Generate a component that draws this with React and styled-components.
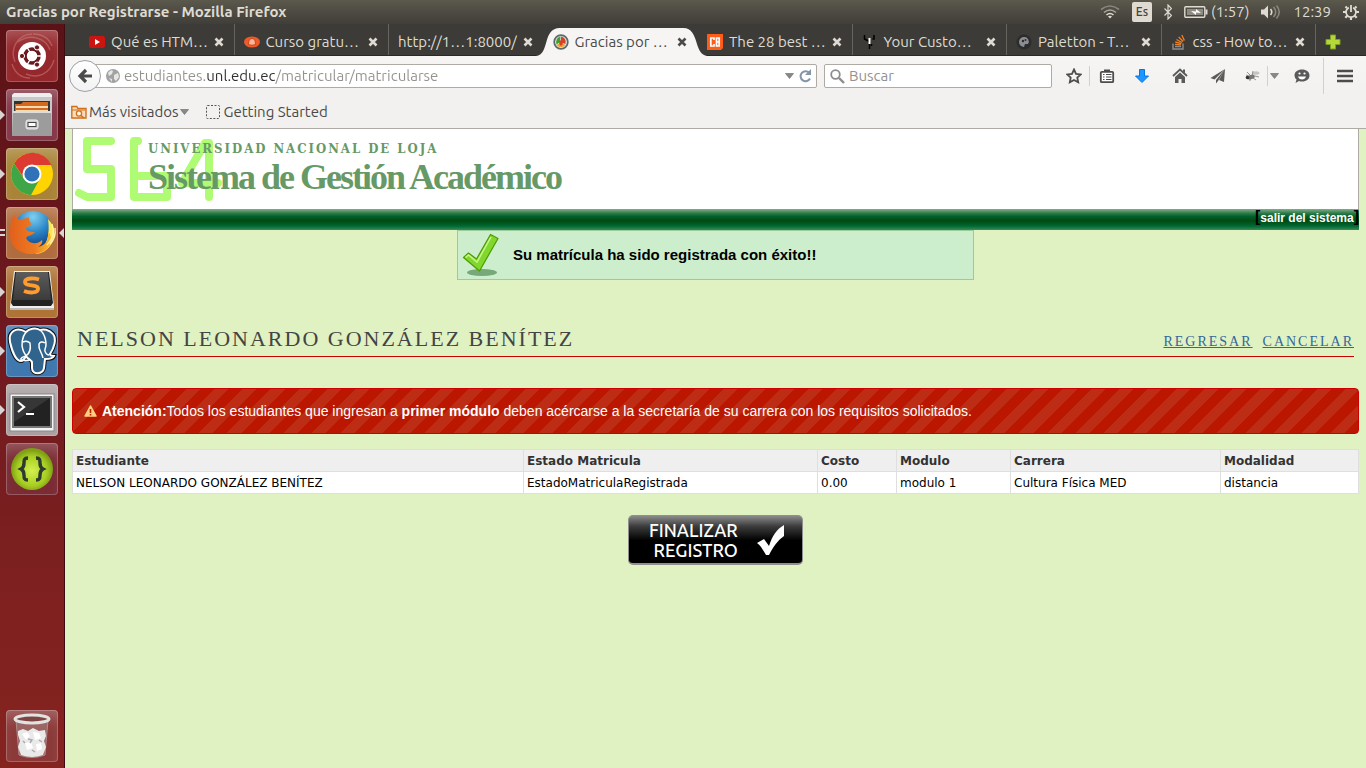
import React from "react";
import styled, { createGlobalStyle, css } from "styled-components";

const ui = '"Ubuntu", "Open Sans", "Noto Sans", sans-serif';
const sans = '"Liberation Sans", Arial, sans-serif';
const serif = '"Liberation Serif", "Times New Roman", serif';

const GlobalStyle = createGlobalStyle`
  *, *::before, *::after { box-sizing: border-box; }
  body { margin: 0; background: #e0f1c2; }
  button, input { font: inherit; color: inherit; border: 0; padding: 0; margin: 0; background: none; }
  a { color: inherit; text-decoration: none; }
  svg { display: block; flex: none; }
  ul { list-style: none; margin: 0; padding: 0; }
`;

const Desktop = styled.div`
  min-height: 100vh;
  display: flex;
  flex-direction: column;
`;

/* ---------- system panel ---------- */
const Panel = styled.header`
  height: 24px;
  flex: none;
  display: flex;
  align-items: center;
  justify-content: space-between;
  padding: 0 7px 0 6px;
  background: linear-gradient(#5b584c, #403e39);
  color: #dfdbd2;
  font: 15px/24px ${ui};
`;
const PanelTitle = styled.strong`
  font-size: 15px;
  font-weight: 700;
`;
const Tray = styled.div`
  display: flex;
  align-items: center;
  gap: 12px;
`;
const TrayItem = styled.span`
  display: flex;
  align-items: center;
  gap: 3px;
`;
const Layout = styled.span`
  width: 20px;
  height: 20px;
  border-radius: 2px;
  background: #dfdbd2;
  color: #45433d;
  font-size: 12px;
  line-height: 20px;
  text-align: center;
  font-weight: 500;
`;

const Work = styled.div`
  flex: 1;
  display: flex;
`;

/* ---------- launcher ---------- */
const Launcher = styled.nav`
  width: 65px;
  flex: none;
  display: flex;
  flex-direction: column;
  gap: 7px;
  padding: 6px 7px 6px 6px;
  border-right: 1px solid #3f0d10;
  background: linear-gradient(#5b1216, #701a20 45%, #80211f 80%, #85231f);
`;
const Tile = styled.button`
  position: relative;
  width: 52px;
  height: 52px;
  border-radius: 4px;
  background: ${(p) => p.$bg};
  box-shadow: inset 0 0 0 1px rgba(255, 255, 255, 0.22), inset 0 14px 16px -8px rgba(255, 255, 255, 0.25);
  ${(p) => p.$last && css`margin-top: auto;`}
`;
const Running = styled.span`
  position: absolute;
  top: 21px;
  left: -6px;
  border: 5px solid transparent;
  border-left-color: #d8d4d4;
  border-right: 0;
`;
const Bars = styled.span`
  position: absolute;
  top: 22px;
  left: -6px;
  width: 5px;
  height: 7px;
  border: solid #d8d4d4;
  border-width: 2px 0;
`;
const Focused = styled.span`
  position: absolute;
  top: 21px;
  right: -6px;
  border: 5px solid transparent;
  border-right-color: #d8d4d4;
  border-left: 0;
`;

/* ---------- browser ---------- */
const Browser = styled.div`
  flex: 1;
  min-width: 0;
  display: flex;
  flex-direction: column;
`;
const TabStrip = styled.div`
  height: 32px;
  display: flex;
  padding-left: 15px;
  background: #3c3b37;
  border-bottom: 1px solid #2a2926;
`;
const Tab = styled.div`
  position: relative;
  flex: 1;
  min-width: 0;
  height: ${(p) => (p.$active ? 32 : 31)}px;
  display: flex;
  align-items: center;
  gap: 6px;
  padding: 4px 10px 0 9px;
  color: ${(p) => (p.$active ? "#4a4a48" : "#dfdbd2")};
  font: 15px/20px ${ui};
  border-right: 1px solid ${(p) => (p.$active || p.$flat ? "transparent" : "#66645e")};
`;
const Shape = styled.svg`
  position: absolute;
  left: -8px;
  top: 4px;
  width: calc(100% + 18px);
  height: 28px;
  z-index: 0;
`;
const TabLabel = styled.button`
  position: relative;
  flex: 1;
  min-width: 0;
  white-space: nowrap;
  text-align: left;
`;
const Close = styled.button`
  position: relative;
  width: 10px;
  height: 10px;
`;
const TabIcon = styled.span`
  position: relative;
  width: 16px;
  height: 16px;
`;
const NewTab = styled.button`
  width: 50px;
  display: grid;
  place-items: center;
  padding: 4px 16px 0 0;
`;
const NavBar = styled.div`
  height: 40px;
  display: flex;
  align-items: center;
  padding-left: 4px;
  background: linear-gradient(#f6f5f4, #f2f1f0);
`;
const Back = styled.button`
  position: relative;
  z-index: 1;
  width: 32px;
  height: 32px;
  margin-right: -12px;
  border: 1px solid #9d9fa6;
  border-radius: 50%;
  background: linear-gradient(#ffffff, #f2f2f3);
  display: grid;
  place-items: center;
`;
const Field = styled.div`
  height: 24px;
  display: flex;
  align-items: center;
  gap: 4px;
  border: 1px solid #aeaba4;
  border-radius: 2px;
  background: #fff;
  font: 15px/22px ${ui};
`;
const UrlField = styled(Field)`
  flex: 1;
  min-width: 0;
  padding: 0 4px 0 16px;
`;
const UrlInput = styled.input`
  flex: 1;
  min-width: 0;
  height: 22px;
  background: linear-gradient(90deg, #94928f 82px, #2f2f2f 82px, #2f2f2f 151px, #94928f 151px);
  background-clip: text;
  -webkit-background-clip: text;
  -webkit-text-fill-color: transparent;
`;
const SearchField = styled(Field)`
  width: 228px;
  margin-left: 7px;
  padding: 0 5px;
`;
const SearchInput = styled.input`
  flex: 1;
  min-width: 0;
  height: 22px;
  &::placeholder { color: #94928f; opacity: 1; }
`;
const IconButton = styled.button`
  width: ${(p) => p.$w}px;
  height: ${(p) => (p.$tall ? 36 : 20)}px;
  display: grid;
  place-items: center;
  border-left: ${(p) => (p.$sep ? "1px solid #d0d0d0" : "0")};
`;
const Tools = styled.div`
  display: flex;
  align-items: center;
  margin-left: 7px;
`;
const Bookmarks = styled.div`
  height: 33px;
  display: flex;
  align-items: center;
  gap: 16px;
  padding-left: 6px;
  background: #f2f1f0;
  border-bottom: 1px solid #aeaba4;
  color: #4a4a48;
  font: 15px/20px ${ui};
`;
const Bookmark = styled.button`
  display: flex;
  align-items: center;
  gap: 2px;
`;

/* ---------- page ---------- */
const Page = styled.main`
  flex: 1;
  padding: 0 7px;
  background: #e0f1c2;
`;
const Banner = styled.div`
  position: relative;
  height: 80px;
  padding: 12px 0 0 75px;
  background: #fff;
  border: solid #aeaba4;
  border-width: 0 1px;
  color: #669966;
`;
const Mark = styled.svg`
  position: absolute;
  left: 0;
  top: 0;
`;
const University = styled.p`
  position: relative;
  margin: 0;
  font: bold 13px/16px "DejaVu Serif Condensed", "DejaVu Serif", serif;
  font-stretch: condensed;
  letter-spacing: 2px;
`;
const System = styled.h1`
  position: relative;
  margin: 0;
  font: bold 36px/40px ${serif};
  letter-spacing: -2px;
`;
const Session = styled.div`
  height: 21px;
  background: linear-gradient(#80b08b, #2f7a48 20%, #00602a 36%, #004a10 56%, #005c26 72%, #006a34 82%, #3c8a58);
  text-align: right;
  color: #000;
  font: bold 16px/16px ${sans};
  a { color: #fff; font-size: 12px; }
`;
const Notice = styled.section`
  width: 517px;
  max-width: 100%;
  height: 50px;
  margin: 0 auto;
  display: flex;
  align-items: center;
  gap: 13px;
  padding-left: 4px;
  border: 1px solid #99cc99;
  background: #cceecc;
  color: #000;
  font: bold 15px/20px ${sans};
`;
const Heading = styled.div`
  display: flex;
  justify-content: space-between;
  align-items: baseline;
  margin: 45px 5px 31px;
  padding-bottom: 3px;
  border-bottom: 1px solid #cc0000;
  font-family: ${serif};
`;
const Student = styled.h2`
  margin: 0;
  color: #444;
  font-size: 22px;
  line-height: 28px;
  font-weight: 400;
  letter-spacing: 2px;
`;
const Actions = styled.nav`
  display: flex;
  gap: 10px;
  color: #336699;
  font-size: 14px;
  line-height: 16px;
  letter-spacing: 2px;
  a { text-decoration: underline; }
`;
const Warning = styled.section`
  display: flex;
  align-items: center;
  height: 46px;
  padding-left: 11px;
  gap: 5px;
  border: 1px solid #cc0000;
  border-radius: 4px;
  background: repeating-linear-gradient(135deg, #bd2d16 0 10px, #ba1600 10px 20px);
  color: #fff;
  font: 14px/20px ${sans};
  p { margin: 0; }
`;
const Enrolment = styled.table`
  width: 100%;
  margin-top: 15px;
  border-collapse: collapse;
  table-layout: fixed;
  background: #fff;
  font: 12px/16px "DejaVu Sans", sans-serif;
  color: #000;
  th, td { height: 22px; padding: 0 3px; text-align: left; border: 1px solid #dfdfdf; white-space: nowrap; }
  th { background: #efefef; color: #333; }
`;
const Col = styled.col`
  width: ${(p) => p.$w}px;
`;
const Finish = styled.button`
  display: flex;
  align-items: center;
  justify-content: space-between;
  width: 175px;
  height: 50px;
  margin: 21px auto 0;
  padding: 0 16px 0 20px;
  border: 1px solid #8f8f8f;
  border-width: 1px 1px 2px;
  border-radius: 5px;
  background: linear-gradient(#8a8a8a, #3c3c3c 22%, #000 52%);
  color: #fff;
  font: 500 18px/20px ${ui};
  text-align: right;
`;

/* ---------- drawings ---------- */
const S = ({ s = 16, w = s, h = s, vb, children }) => (
  <svg width={w} height={h} viewBox={vb || `0 0 ${w} ${h}`} fill="none" aria-hidden="true">{children}</svg>
);
const CloseX = () => (
  <S s={10}><path d="M1.500 1.500l7 7M8.500 1.500l-7 7" stroke="currentColor" strokeWidth="2.600" /></S>
);
const Caret = () => <S w={9} h={6}><path d="M.5 .5h8L4.500 5.500z" fill="#888" stroke="#666" strokeWidth=".6" /></S>;

const Dash = () => (
  <S s={52}>
    <path d="M26 4C10 5 4 20 9 32M46 16C42 6 34 4 27 4M48 30C44 44 32 49 20 44M6 34c3 9 9 14 18 14M12 12c12-9 28-4 32 8" stroke="#d98a8a" strokeOpacity=".45" strokeWidth="1.400" />
    <circle cx="26" cy="26" r="14" fill="#fff" />
    <circle cx="26" cy="26" r="7" stroke="#6a1a1e" strokeWidth="3.600" />
    <g stroke="#fff" strokeWidth="1.400"><path d="M26 26l10 0M26 26l-5-9M26 26l-5 9" /></g>
    <circle cx="26" cy="26" r="5" fill="#fff" />
    <g fill="#6a1a1e" stroke="#fff"><circle cx="16" cy="26" r="2.600" /><circle cx="31" cy="17.400" r="2.600" /><circle cx="31" cy="34.600" r="2.600" /></g>
  </S>
);
const Files = () => (
  <S s={52}>
    <path d="M6 6l2-2h36l2 2v8H6z" fill="#eee" /><path d="M6 8h40v38H6z" fill="#c8c8c8" />
    <path d="M8 12h36v12H8z" fill="#333" /><path d="M9 15h6l2-2h25v9H9z" fill="#d2691e" />
    <path d="M10 17h32v2H10zM10 21h32v2H10z" fill="#fbd9ae" />
    <path d="M7 22h38l1 25H6z" fill="#9c9c9c" /><path d="M7 22h38v2H7z" fill="#ddd" />
    <rect x="20" y="31" width="12" height="9" rx="2" fill="#ccc" stroke="#eee" /><rect x="22" y="33.500" width="8" height="4" fill="#fff" stroke="#444" />
  </S>
);
const Chrome = () => (
  <S s={52}>
    <circle cx="26" cy="26" r="21" fill="#ffd400" />
    <path d="M8 15.500A21 21 0 0 1 45.400 17H26a9 9 0 0 0-8 13z" fill="#dd3b32" />
    <path d="M8 15.500A21 21 0 0 0 25 47l9-16.500a9 9 0 0 1-16 0z" fill="#3fa648" />
    <circle cx="26" cy="26" r="9.500" fill="#fff" /><circle cx="26" cy="26" r="7.600" fill="#2f72b8" />
  </S>
);
const Firefox = () => (
  <S s={52}>
    <defs>
      <radialGradient id="sea" cx=".5" cy=".15" r=".8"><stop offset="0" stopColor="#7fd0ee" /><stop offset=".5" stopColor="#2a86c8" /><stop offset="1" stopColor="#123a80" /></radialGradient>
      <linearGradient id="fur" x1="0" x2="1"><stop offset="0" stopColor="#e2601c" /><stop offset=".6" stopColor="#ee7a22" /><stop offset="1" stopColor="#fdc02f" /></linearGradient>
    </defs>
    <circle cx="27" cy="24" r="20" fill="url(#sea)" />
    <path d="M42 12c7 7 8 16 4 24-4 7-10 11-17 11 13-7 15-20 13-35z" fill="#ffe650" />
    <path d="M8 8c2 1 4 3 5 5 4-2 8-1 10-3 0 3 0 4 2 6 1 2-2 3-5 5 0 3 4 4 9 4-3 4-7 3-9 6 3 6 11 7 16 2 1 3-1 5-4 7 9-2 11-9 10-16 3 4 4 8 3 12-3 7-10 11-19 11C13 47 4 39 4 28 4 20 5 12 8 8z" fill="url(#fur)" />
    <path d="M46 17c3 8 1 15-5 21M49 21c1 7-1 12-5 16" stroke="#fff3a0" strokeWidth="1.400" />
  </S>
);
const Sublime = () => (
  <S s={52}>
    <defs><linearGradient id="key" x2="0" y2="1"><stop offset="0" stopColor="#5c5c5c" /><stop offset="1" stopColor="#3b3b3b" /></linearGradient></defs>
    <path d="M8 5h36l4 36v3H4v-3z" fill="#efefef" /><path d="M4 42h44v2H4z" fill="#bbb" /><path d="M9 6h34l4 31-2 3H7l-2-3z" fill="#222" /><path d="M10 6h32l3 28H7z" fill="url(#key)" />
    <path d="M33 13.500c-4-1.500-14-2-14 2.500 0 5 14 2 13 7 0 4.500-9 4-14 2" stroke="#ff9b2f" strokeWidth="3.800" />
  </S>
);
const Postgres = () => (
  <S s={52}>
    <path d="M20 7C10 1 2 7 4 17c2 9 6 19 11 19 2 0 4-3 5-5 2 4 6 3 6 7v5c0 7 11 7 12 0l1-9c4 0 8 0 9-3-2 0-4 0-4-2 4-6 7-15 3-20C43 4 37 4 34 5c-5-3-11-1-14 2z" fill="#31648c" stroke="#111" strokeWidth="4" />
    <path d="M20 7C10 1 2 7 4 17c2 9 6 19 11 19 2 0 4-3 5-5 2 4 6 3 6 7v5c0 7 11 7 12 0l1-9c4 0 8 0 9-3-2 0-4 0-4-2 4-6 7-15 3-20C43 4 37 4 34 5c-5-3-11-1-14 2z" fill="#31648c" stroke="#fff" strokeWidth="2" />
    <path d="M20 7c-4 5-5 13-3 18 1 3 2 4 3 6 3-2 5-7 4-13-2-2-5-2-7-1M34 5c6 5 7 15 5 19-1 3 2 6 4 6M39 18c-3-2-5-1-6 1-1 6 3 8 4 14M20 31c-3 1-6 2-5 4 3 1 7 0 10 0" stroke="#fff" strokeWidth="1.500" />
  </S>
);
const Terminal = () => (
  <S s={52}>
    <rect x="4" y="10" width="44" height="37" fill="#f4f4f4" stroke="#888" /><rect x="6" y="12" width="40" height="32" fill="#777" />
    <rect x="8" y="14" width="36" height="28" fill="#222" /><path d="M8 14h36L8 38z" fill="#444" opacity=".6" />
    <path d="M12 18l6 5-6 5M20 30h8" stroke="#fff" strokeWidth="2.200" />
  </S>
);
const Braces = () => (
  <S s={52}>
    <defs><radialGradient id="lime" cx=".5" cy=".55" r=".5"><stop offset="0" stopColor="#d4f04e" /><stop offset=".7" stopColor="#a8ce22" /><stop offset="1" stopColor="#7f9f14" /></radialGradient></defs>
    <circle cx="26" cy="26" r="21" fill="url(#lime)" />
    <path d="M22 15c-4 0-4 2-4 5 0 4-1 5-3 6 2 1 3 2 3 6 0 3 0 5 4 5M30 15c4 0 4 2 4 5 0 4 1 5 3 6-2 1-3 2-3 6 0 3 0 5-4 5" stroke="#2c3a30" strokeWidth="3.400" />
  </S>
);
const Trash = () => (
  <S s={52}>
    <path d="M10 10l3 35q13 5 26 0l3-35z" fill="#a78684" opacity=".55" stroke="#ccc" />
    <path d="M12 21l5-2 5 2 5-3 6 3 6-1 1 6-2 5 2 6-3 8q-11 4-22 0l-3-8 2-6-2-6z" fill="#e9e9e9" />
    <path d="M16 24l5-2 3 4-4 4zM27 22l6 1 2 5-6 2zM19 33l6-1 2 6-6 2zM30 34l5-1 1 6-5 2z" fill="#fff" />
    <path d="M22 29l4 1-2 3M33 30l3 2M17 31l2 2M26 40l3 2" stroke="#aaa" strokeWidth="1.400" />
    <ellipse cx="26" cy="9" rx="17" ry="4" fill="#7d4542" stroke="#e2e2e2" strokeWidth="3" />
  </S>
);

const favicons = {
  youtube: <S><rect y="2" width="16" height="12" rx="2" fill="#cc1410" /><path d="M6 5l5 3-5 3z" fill="#fff" /></S>,
  orange: <S><ellipse cx="8" cy="8" rx="8" ry="5.500" fill="#f05a28" /><path d="M4.500 10.500q0-6 3.500-6t3.500 6q-3.500 1.500-7 0z" fill="#fbb59a" stroke="#c23c12" strokeWidth=".8" /></S>,
  globe: <S><circle cx="8" cy="8" r="6.800" fill="#e8eee4" stroke="#5d6a6c" strokeWidth="1.800" /><path d="M7.500 2.500Q2 4 3.500 10.500L7 8z" fill="#3fa02f" /><path d="M8 2.500Q14 4 12.500 10L8 8.500z" fill="#d9402b" /><path d="M3.500 11q4.500 4.500 9 0L8 8.500z" fill="#f0a030" /><path d="M8 5.500l2 3-1 3H7l-1-3z" fill="#d9402b" /></S>,
  cb: <S><path d="M0 0h16v14l-2 2H0z" fill="#ff5c1a" /><path d="M7 6V4H3.800v8H7v-2M9.500 4v8h2.700V4zM9.500 8h2.500" stroke="#fff" strokeWidth="1.700" /></S>,
  bug: <S><path d="M2.500 1v4l4 2M10.500 5l1.500 0V1M5.500 6l2 2v7M9.500 10v2" stroke="#000" strokeWidth="1.500" /><path d="M7.500 4v6" stroke="#fff" strokeWidth="2" /></S>,
  palette: <S><circle cx="8" cy="8" r="7.500" fill="#2b2c2e" /><path d="M8 3a5 5 0 1 0 0 10l1-3h3a4.500 4.500 0 0 0-4-7z" fill="#8b8d90" /><circle cx="7" cy="7" r="1.200" fill="#2b2c2e" /><circle cx="9.500" cy="6" r="1" fill="#2b2c2e" /></S>,
  stack: <S><path d="M2 9.500V15h10V9.500M4 12.500h6" stroke="#8b8d90" strokeWidth="1.400" /><path d="M4 10.300l6 .6M4.300 8l6 1.600M5.500 5.500l5.500 3M7.700 3l4.500 4.500M10.800 1l2.600 5.500" stroke="#f48024" strokeWidth="1.300" /></S>,
};
const tabs = [
  { icon: "youtube", label: "Qué es HTM…" },
  { icon: "orange", label: "Curso gratu…" },
  { label: "http://1…1:8000/", flat: true },
  { icon: "globe", label: "Gracias por …", active: true },
  { icon: "cb", label: "The 28 best …" },
  { icon: "bug", label: "Your Custo…" },
  { icon: "palette", label: "Paletton - T…" },
  { icon: "stack", label: "css - How to…" },
];
const launchers = [
  { name: "Inicio", Icon: Dash, bg: "#94282c" },
  { name: "Archivos", Icon: Files, bg: "#853748", run: true },
  { name: "Chrome", Icon: Chrome, bg: "#a98438", run: true },
  { name: "Firefox", Icon: Firefox, bg: "#b06c3e", bars: true, focus: true },
  { name: "Sublime Text", Icon: Sublime, bg: "#ae7335", run: true },
  { name: "pgAdmin", Icon: Postgres, bg: "#3f78ae", run: true },
  { name: "Terminal", Icon: Terminal, bg: "#aaa0a2", run: true },
  { name: "Brackets", Icon: Braces, bg: "#7a2b34" },
  { name: "Papelera", Icon: Trash, bg: "#8b3a39", last: true },
];
const columns = [
  ["Estudiante", "NELSON LEONARDO GONZÁLEZ BENÍTEZ"],
  ["Estado Matricula", "EstadoMatriculaRegistrada", 294],
  ["Costo", "0.00", 79],
  ["Modulo", "modulo 1", 114],
  ["Carrera", "Cultura Física MED", 210],
  ["Modalidad", "distancia", 138],
];

export default function App() {
  return (
    <Desktop>
      <GlobalStyle />
      <Panel>
        <PanelTitle>Gracias por Registrarse - Mozilla Firefox</PanelTitle>
        <Tray>
          <S w={20} h={16}><path d="M1 5.500q9-7 18 0" stroke="#88867e" strokeWidth="1.600" /><path d="M4 8.500q6-5 12 0" stroke="#aaa79f" strokeWidth="1.600" /><path d="M6.500 11q3.500-3 7 0" stroke="#dfdbd2" strokeWidth="1.600" /><path d="M8 12.500q2-1.500 4 0l-2 2z" fill="#dfdbd2" /></S>
          <Layout>Es</Layout>
          <S w={8} h={16}><path d="M.5 4.500l7 7L4 15V1l3.500 3.500-7 7" stroke="#dfdbd2" strokeWidth="1.200" /></S>
          <TrayItem>
            <S w={24} h={12}><rect x=".8" y=".8" width="20" height="10.400" rx="1" stroke="#dfdbd2" strokeWidth="1.400" /><path d="M22.500 3.500v5" stroke="#dfdbd2" strokeWidth="2" /><rect x="3" y="3" width="16" height="6" fill="#8e8b83" /><path d="M7 5l5 .5V3l5 4-5-.5V9z" fill="#fff" /></S>
            (1:57)
          </TrayItem>
          <S w={20} h={16}><path d="M0 5.500h3l4-4v13l-4-4H0z" fill="#dfdbd2" /><path d="M9.500 5q2.500 3 0 6" stroke="#dfdbd2" strokeWidth="1.600" /><path d="M12.500 3q4.500 5 0 10M15.500 1.500q5.500 6.500 0 13" stroke="#8b8980" strokeWidth="1.500" /></S>
          <time>12:39</time>
          <S>
            <path d="M5.800 3.600a5 5 0 1 0 4.400 0" stroke="#dfdbd2" strokeWidth="1.800" />
            <path d="M8 1v7" stroke="#dfdbd2" strokeWidth="1.800" />
            <path d="M4 4L2.500 2.500M12 4l1.500-1.500M3 8H0M13 8h3M4.300 11.700l-2 2M11.700 11.700l2 2M8 13v3" stroke="#dfdbd2" strokeWidth="2.200" />
          </S>
        </Tray>
      </Panel>
      <Work>
        <Launcher aria-label="Lanzador">
          {launchers.map(({ name, Icon, bg, run, bars, focus, last }) => (
            <Tile key={name} aria-label={name} $bg={bg} $last={last}>
              <Icon />
              {run && <Running />}
              {bars && <Bars />}
              {focus && <Focused />}
            </Tile>
          ))}
        </Launcher>
        <Browser>
          <TabStrip>
            {tabs.map((t) => (
              <Tab key={t.label} $active={t.active} $flat={t.flat}>
                {t.active && (
                  <Shape viewBox="0 0 172 28" preserveAspectRatio="none" aria-hidden="true">
                    <path d="M0 28C14 27 6 0 24 0H148C164 0 158 27 172 28z" fill="#f6f5f4" />
                  </Shape>
                )}
                {t.icon && <TabIcon>{favicons[t.icon]}</TabIcon>}
                <TabLabel>{t.label}</TabLabel>
                <Close aria-label="Cerrar pestaña"><CloseX /></Close>
              </Tab>
            ))}
            <NewTab aria-label="Nueva pestaña">
              <S><path d="M5.500 1h5v4.500H15v5h-4.500V15h-5v-4.500H1v-5h4.500z" fill="#b4d83c" stroke="#7fa01c" /></S>
            </NewTab>
          </TabStrip>
          <NavBar>
            <Back aria-label="Atrás"><S><path d="M9 2L3 8l6 6M3 8h12" stroke="#4b4b4b" strokeWidth="3.200" /></S></Back>
            <UrlField>
              <S s={14}><circle cx="7" cy="7" r="7" fill="#a2a2a2" /><path d="M2 4q3-4 5-2l-1 3-3 2zM8 6l4-2 1 4-3 4-2-2zM3 9l3 1v3z" fill="#e6e6e6" /></S>
              <UrlInput aria-label="Dirección" defaultValue="estudiantes.unl.edu.ec/matricular/matricularse" />
              <Caret />
              <S s={14}><path d="M12 9.500A5 5 0 1 1 11 3.500" stroke="#8395a7" strokeWidth="2" /><path d="M13 0v6H7z" fill="#8395a7" /></S>
            </UrlField>
            <SearchField>
              <S s={15}><circle cx="5.500" cy="5.500" r="4.300" stroke="#8c8c8c" strokeWidth="1.800" /><path d="M9 9l5 5" stroke="#8c8c8c" strokeWidth="2.400" /></S>
              <SearchInput aria-label="Buscar" placeholder="Buscar" />
            </SearchField>
            <Tools>
              <IconButton $w={30} aria-label="Añadir marcador"><S><path d="M8 1.500l2 4.300 4.800.6-3.500 3.200.9 4.700L8 12l-4.200 2.300.9-4.700L1.200 6.400 6 5.800z" stroke="#4c4c4c" strokeWidth="1.800" /></S></IconButton>
              <IconButton $w={34} $sep aria-label="Marcadores"><S><rect x="1.800" y="3.800" width="12.400" height="10.400" rx="1" fill="#fff" stroke="#4c4c4c" strokeWidth="1.800" /><path d="M5 4V1.500h6V4" fill="#4c4c4c" /><path d="M4 6.500h1.500M7 6.500h5.500M4 9h1.500M7 9h5.500M4 11.500h1.500M7 11.500h5.500" stroke="#4c4c4c" strokeWidth="1.200" /></S></IconButton>
              <IconButton $w={38} aria-label="Descargas"><S><path d="M5.500 1.500h5V8h4L8 14.500 1.500 8h4z" fill="#1e96ff" stroke="#0a74dd" /></S></IconButton>
              <IconButton $w={38} aria-label="Inicio"><S><path d="M1 8l7-6.500L15 8" stroke="#5a5a5a" strokeWidth="1.800" /><path d="M3 9l5-4.500L13 9v6H9.500v-4h-3v4H3zM11 1.500h2v4l-2-2z" fill="#5a5a5a" /></S></IconButton>
              <IconButton $w={38} aria-label="Compartir"><S><path d="M15 1L.5 10l4 1.500zM15 1L6 12v3.500l2.200-2.800zM15 1l-1 13-5-2z" fill="#5a5a5a" /></S></IconButton>
              <IconButton $w={30} aria-label="Firebug"><S><ellipse cx="7" cy="9" rx="4" ry="2.200" fill="#777" transform="rotate(-20 7 9)" /><ellipse cx="12" cy="5" rx="3.500" ry="1.800" fill="#c4c4c4" /><circle cx="3.500" cy="9.500" r="1.800" fill="#333" /><path d="M3 4l4 4M9 3L8 8M6 10v3M9 10l3 2M11 8l4 1M2 7l3 1" stroke="#777" strokeWidth=".8" /></S></IconButton>
              <IconButton $w={14} $sep aria-label="Opciones de Firebug"><Caret /></IconButton>
              <IconButton $w={42} aria-label="Chat"><S><path d="M8 1.500c4.500 0 7.500 2.500 7.500 6s-3 6-7.500 6q-1.500 0-3-.5l-3.500 2 1-3.500Q.5 10 .5 7.500c0-3.500 3-6 7.500-6z" fill="#5a5a5a" /><circle cx="5.500" cy="5.500" r="1.100" fill="#fff" /><circle cx="10.500" cy="5.500" r="1.100" fill="#fff" /><path d="M4 8.500h8q-1 3-4 3t-4-3z" fill="#fff" /></S></IconButton>
              <IconButton $w={43} $sep $tall aria-label="Menú"><S><path d="M0 3h16M0 8h16M0 13h16" stroke="#4c4c4c" strokeWidth="2.600" /></S></IconButton>
            </Tools>
          </NavBar>
          <Bookmarks>
            <Bookmark>
              <S><path d="M.8 14V2.500h5l1 2H15V14z" fill="#fbdcb8" stroke="#d0701c" strokeWidth="1.400" /><path d="M1 6h13" stroke="#d0701c" /><circle cx="8" cy="9.500" r="2.600" fill="#fff3e2" stroke="#d0701c" strokeWidth="1.300" /><path d="M10 11.500l3 2.500" stroke="#d0701c" strokeWidth="1.500" /></S>
              Más visitados
              <Caret />
            </Bookmark>
            <Bookmark>
              <S><rect x="1.500" y="1.500" width="13" height="13" rx="1" stroke="#555" strokeDasharray="2 1.500" /></S>
              Getting Started
            </Bookmark>
          </Bookmarks>
          <Page>
            <Banner>
              <Mark width="152" height="78" viewBox="0 0 152 78" fill="none" stroke="#b0fb74" strokeWidth="8" strokeLinecap="round" strokeLinejoin="round" aria-hidden="true">
                <path d="M38 12H14V40H38V68H14L6 64" /><path d="M65 12H61V68H94V47H61" /><path d="M145 54H109L132 14H136V68" />
              </Mark>
              <University>UNIVERSIDAD NACIONAL DE LOJA</University>
              <System>Sistema de Gestión Académico</System>
            </Banner>
            <Session>[<a href="#salir">salir del sistema</a>]</Session>
            <Notice>
              <S w={38} h={44}>
                <ellipse cx="20" cy="39.500" rx="15" ry="3.500" fill="#76a878" />
                <path d="M1.500 24.500l5-4.500 8 6L28.500 1.500l7.500 4L17.500 38z" fill="#80d82c" stroke="#4e9a06" strokeWidth="1.200" strokeLinejoin="round" />
                <path d="M3.500 24.500l3-2.500 8.500 7L29 4" stroke="#c8f58c" strokeWidth="1.500" />
              </S>
              Su matrícula ha sido registrada con éxito!!
            </Notice>
            <Heading>
              <Student>NELSON LEONARDO GONZÁLEZ BENÍTEZ</Student>
              <Actions><a href="#regresar">REGRESAR</a><a href="#cancelar">CANCELAR</a></Actions>
            </Heading>
            <Warning>
              <S w={13} h={12}><path d="M6.500 1L12 11H1z" fill="#ffd080" stroke="#ffd080" strokeWidth="1.500" strokeLinejoin="round" /><path d="M6.500 4v4M6.500 9v1.500" stroke="#bb2208" strokeWidth="1.600" /></S>
              <p><strong>Atención:</strong>Todos los estudiantes que ingresan a <strong>primer módulo</strong> deben acércarse a la secretaría de su carrera con los requisitos solicitados.</p>
            </Warning>
            <Enrolment>
              <colgroup>{columns.map(([name, , w]) => (w ? <Col key={name} $w={w} /> : <col key={name} />))}</colgroup>
              <thead><tr>{columns.map(([name]) => <th key={name} scope="col">{name}</th>)}</tr></thead>
              <tbody><tr>{columns.map(([name, value]) => <td key={name}>{value}</td>)}</tr></tbody>
            </Enrolment>
            <Finish>
              <span>FINALIZAR<br />REGISTRO</span>
              <S w={30} h={32}><path d="M1 19l7-4 5 7C16 12 21 5 28 1v11C22 16 17 23 13 31h-3C7 26 5 22 1 19z" fill="#fff" /></S>
            </Finish>
          </Page>
        </Browser>
      </Work>
    </Desktop>
  );
}
